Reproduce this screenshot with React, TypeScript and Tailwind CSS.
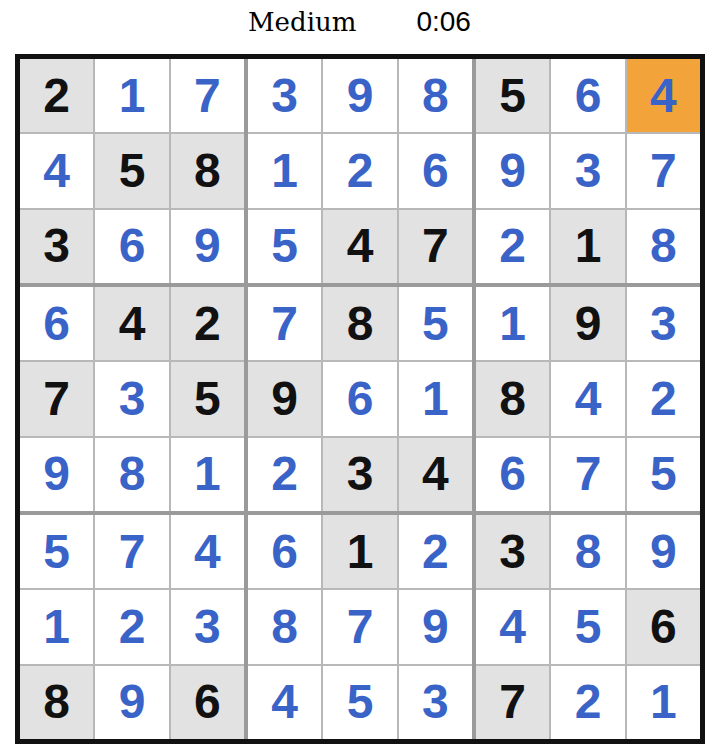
type Cell = { v: number; given?: boolean; selected?: boolean };

const rows: string[] = [
  "2g 1 7 3 9 8 5g 6 4s",
  "4 5g 8g 1 2 6 9 3 7",
  "3g 6 9 5 4g 7g 2 1g 8",
  "6 4g 2g 7 8g 5 1 9g 3",
  "7g 3 5g 9g 6 1 8g 4 2",
  "9 8 1 2 3g 4g 6 7 5",
  "5 7 4 6 1g 2 3g 8 9",
  "1 2 3 8 7 9 4 5 6g",
  "8g 9 6g 4 5 3 7g 2 1",
];

const board: Cell[][] = rows.map((r) =>
  r.split(" ").map((t) => ({
    v: Number(t[0]),
    given: t.includes("g"),
    selected: t.includes("s"),
  }))
);

function SudokuCell({ cell }: { cell: Cell }) {
  let bg = "bg-white";
  if (cell.given) bg = "bg-[#e2e2e2]";
  if (cell.selected) bg = "bg-[#f2a33a]";
  const color = cell.given ? "text-[#111111]" : "text-[#3a63c8]";
  return (
    <div className={`${bg} ${color} flex items-center justify-center text-[48px] font-bold leading-none`}>
      {cell.v}
    </div>
  );
}

export default function App() {
  const boxes = [0, 1, 2].flatMap((br) => [0, 1, 2].map((bc) => ({ br, bc })));

  return (
    <div className="w-[720px] h-[756px] bg-white" style={{ fontFamily: '"Liberation Sans", Arial, sans-serif' }}>
      <header className="h-[44px] flex items-center pl-[248px] gap-[60px] text-black">
        <span className="text-[26px]" style={{ fontFamily: '"DejaVu Serif", serif' }}>
          Medium
        </span>
        <span className="text-[28px]">0:06</span>
      </header>

      <div className="ml-[15px] mt-[10px] w-[690px] h-[690px] border-[5px] border-[#111111] bg-[#9a9a9a] grid grid-cols-3 grid-rows-3 gap-[4px]">
        {boxes.map(({ br, bc }) => (
          <div key={`${br}-${bc}`} className="bg-[#b8b8b8] grid grid-cols-3 grid-rows-3 gap-[2px]">
            {[0, 1, 2].flatMap((r) =>
              [0, 1, 2].map((c) => (
                <SudokuCell key={`${r}-${c}`} cell={board[br * 3 + r][bc * 3 + c]} />
              ))
            )}
          </div>
        ))}
      </div>
    </div>
  );
}
